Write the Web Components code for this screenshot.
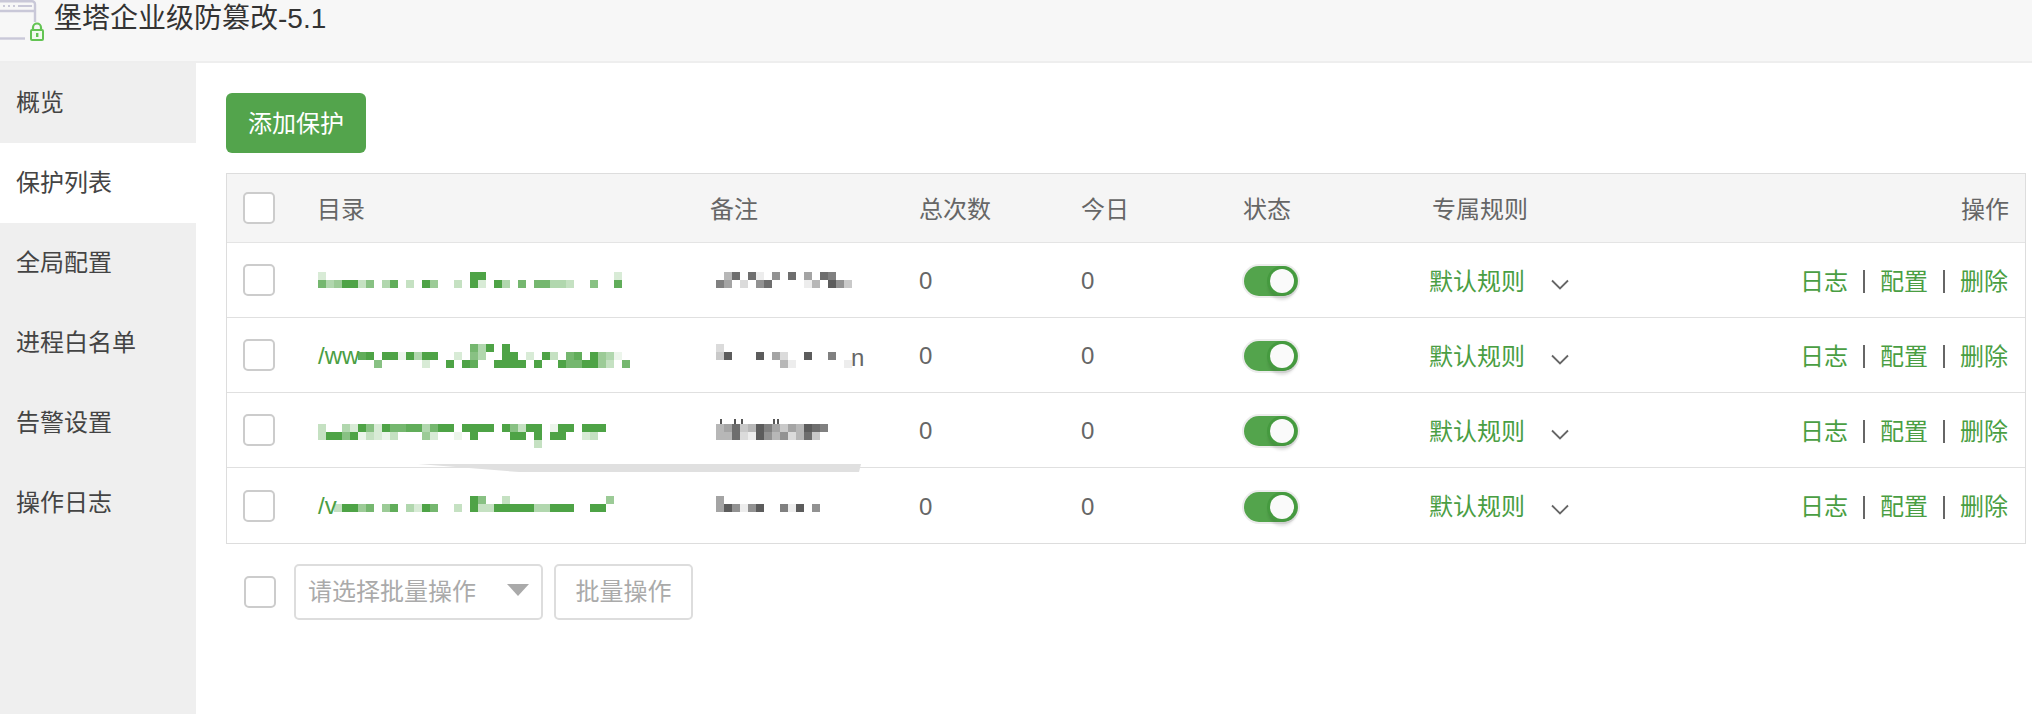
<!DOCTYPE html>
<html lang="zh">
<head>
<meta charset="utf-8">
<title>堡塔企业级防篡改</title>
<style>
    html, body { margin: 0; height: 100%; background: #fff; }
    body { font-family: "Liberation Sans", "Noto Sans CJK SC", sans-serif; overflow: hidden; }
    .pagina { display: flex; flex-direction: column; height: 714px; }
    .cuerpo { display: flex; flex: 1; min-height: 0; }
    .contenido { flex: 1; padding: 30px 6px 0 30px; min-width: 0; }
</style>
</head>
<body>
<div class="pagina">
    <bt-header>堡塔企业级防篡改-5.1</bt-header>
    <div class="cuerpo">
        <bt-sidebar>
            <bt-menu-item>概览</bt-menu-item>
            <bt-menu-item active>保护列表</bt-menu-item>
            <bt-menu-item>全局配置</bt-menu-item>
            <bt-menu-item>进程白名单</bt-menu-item>
            <bt-menu-item>告警设置</bt-menu-item>
            <bt-menu-item>操作日志</bt-menu-item>
        </bt-sidebar>
        <div class="contenido">
            <bt-button>添加保护</bt-button>
            <bt-table>
                <bt-row>
                    <mosaic-text slot="dir" offset="29" rows="20000000000000000009900000000000000002|74599360480309500309209407077443006008"></mosaic-text>
                    <mosaic-text slot="note" offset="29" tone="gray" rows="048081060805087|75020680000140963"></mosaic-text>
                </bt-row>
                <bt-row>
                    <mosaic-text slot="dir" offset="26" rows="000000000000000000074909|00000890991949900206400990209307809541|000000060000020090980099990900977995307">/ww</mosaic-text>
                    <mosaic-text slot="note" offset="26" tone="gray" rows="2|39000905200900700|00000000410000001" tail="n"></mosaic-text>
                </bt-row>
                <bt-row>
                    <mosaic-text slot="dir" offset="31" rows="300429629778847990999909639901990999|39969132130005200109000099090990023|0000000000000000000000000003"></mosaic-text>
                    <mosaic-text slot="note" offset="31" tone="gray" ticks="4,18,25,57,61" rows="45834975354987|44821964624830"></mosaic-text>
                </bt-row>
                <bt-row>
                    <mosaic-text slot="dir" offset="28" rows="0000000000000000000960030000000000005|003995705804297003093399999449990099">/v</mosaic-text>
                    <mosaic-text slot="note" offset="28" tone="gray" rows="5|5961690071906"></mosaic-text>
                </bt-row>
            </bt-table>
            <bt-footer></bt-footer>
        </div>
    </div>
</div>

<script>
const FUENTE = '"Liberation Sans", "Noto Sans CJK SC", sans-serif';
const VERDE = '#53a44c';
const VERDE_TEXTO = '#4a9e43';

// Cabecera con logo recortado por arriba
class BtHeader extends HTMLElement {
    constructor() {
        super();
        this.attachShadow({ mode: 'open' });
        this.shadowRoot.innerHTML = `
            <style>
                :host {
                    display: flex;
                    height: 61px;
                    flex: none;
                    background: #f7f7f7;
                    border-bottom: 2px solid #eeeeee;
                    font: 28px/38px ${FUENTE};
                    color: #333;
                }
                svg { flex: none; display: block; }
                .titulo { margin-left: 8px; }
            </style>
            <svg width="46" height="42" viewBox="0 0 46 42">
                <g fill="none" stroke="#c9c8d8" stroke-width="2.4">
                    <path d="M0 1.2H32a3 3 0 0 1 3 3V22"/>
                    <path d="M0 11H35"/>
                    <path d="M0 38.5H25"/>
                </g>
                <g fill="#c9c8d8">
                    <rect x="3" y="5" width="2" height="2"/>
                    <rect x="8" y="5" width="2" height="2"/>
                    <rect x="13" y="5" width="2" height="2"/>
                    <rect x="18" y="5" width="14" height="2"/>
                </g>
                <path d="M33 30v-2.500a4 4 0 0 1 8 0V30" fill="none" stroke="#63c453" stroke-width="2.200"/>
                <rect x="31" y="30" width="12" height="10" rx="1" fill="#f2fbef" stroke="#63c453" stroke-width="2"/>
                <rect x="36" y="33" width="2.400" height="4" fill="#63c453"/>
            </svg>
            <span class="titulo"><slot></slot></span>
        `;
    }
}

class BtSidebar extends HTMLElement {
    constructor() {
        super();
        this.attachShadow({ mode: 'open' });
        this.shadowRoot.innerHTML = `
            <style>
                :host { display: block; width: 196px; flex: none; background: #efefef; }
            </style>
            <slot></slot>
        `;
    }
}

class BtMenuItem extends HTMLElement {
    constructor() {
        super();
        this.attachShadow({ mode: 'open' });
        this.shadowRoot.innerHTML = `
            <style>
                :host {
                    display: flex;
                    align-items: center;
                    box-sizing: border-box;
                    height: 80px;
                    padding: 0 0 5px 16px;
                    font: 24px ${FUENTE};
                    color: #444;
                }
                :host([active]) { background: #fff; }
            </style>
            <slot></slot>
        `;
    }
}

class BtButton extends HTMLElement {
    constructor() {
        super();
        this.attachShadow({ mode: 'open' });
        this.shadowRoot.innerHTML = `
            <style>
                :host {
                    display: flex;
                    align-items: center;
                    justify-content: center;
                    box-sizing: border-box;
                    width: 140px;
                    height: 60px;
                    padding-bottom: 3px;
                    border-radius: 6px;
                    background: ${VERDE};
                    color: #fff;
                    font: 24px ${FUENTE};
                }
            </style>
            <slot></slot>
        `;
    }
}

class BtCheck extends HTMLElement {
    constructor() {
        super();
        this.attachShadow({ mode: 'open' });
        this.shadowRoot.innerHTML = `
            <style>
                :host {
                    display: block;
                    width: 32px;
                    height: 32px;
                    box-sizing: border-box;
                    border: 2px solid #cccccc;
                    border-radius: 5px;
                    background: #fff;
                    flex: none;
                }
            </style>
        `;
    }
}

class BtSwitch extends HTMLElement {
    constructor() {
        super();
        this.attachShadow({ mode: 'open' });
        this.shadowRoot.innerHTML = `
            <style>
                :host {
                    display: block;
                    position: relative;
                    width: 54px;
                    height: 30px;
                    margin-top: 2px;
                    border-radius: 15px;
                    background: ${VERDE};
                    box-shadow: 0 0 0 2px #ececec;
                }
                .bola {
                    position: absolute;
                    right: 4px;
                    top: 3px;
                    width: 24px;
                    height: 24px;
                    border-radius: 50%;
                    background: #fafafa;
                    box-shadow: 0 0 0 3px #459a3f, 0 5px 3px 2px rgba(0, 0, 0, 0.12);
                }
            </style>
            <div class="bola"></div>
        `;
    }
}

// Texto pixelado: cada digito es la opacidad de un cuadro de 8px
class MosaicText extends HTMLElement {
    constructor() {
        super();
        this.attachShadow({ mode: 'open' });
    }

    connectedCallback() {
        const filas = (this.getAttribute('rows') || '').split('|');
        const gris = this.getAttribute('tone') === 'gray';
        const color = gris ? '#5c5c5c' : '#4ea346';
        const tail = this.getAttribute('tail');
        const ticks = this.getAttribute('ticks');
        let cuadros = '';
        filas.forEach((fila, y) => {
            [...fila].forEach((d, x) => {
                if (d === '0') return;
                const op = Number(d) === 9 ? 1 : Number(d) / 9;
                cuadros += `<rect x="${x * 8}" y="${y * 8}" width="8" height="8" fill="${color}" opacity="${op.toFixed(2)}"/>`;
            });
        });
        // restos de letras que asoman por encima del mosaico
        if (ticks) {
            ticks.split(',').forEach((x) => {
                cuadros += `<rect x="${x}" y="-5" width="2" height="5" fill="#555"/>`;
            });
        }
        const offset = this.getAttribute('offset') || 0;
        this.shadowRoot.innerHTML = `
            <style>
                :host {
                    display: block;
                    position: relative;
                    margin-top: ${offset}px;
                    margin-left: ${gris ? 6 : 0}px;
                    height: 24px;
                }
                svg { display: block; position: relative; overflow: visible; }
                .prefijo {
                    position: absolute;
                    left: 0;
                    top: ${filas.length === 3 ? -3 : -5}px;
                    font: 24px/30px ${FUENTE};
                    color: ${VERDE_TEXTO};
                    white-space: nowrap;
                }
                .cola {
                    position: absolute;
                    left: 135px;
                    top: -1px;
                    font: 24px/30px ${FUENTE};
                    color: #666;
                }
            </style>
            <span class="prefijo"><slot></slot></span>
            <svg width="320" height="24" viewBox="0 0 320 24">${cuadros}</svg>
            ${tail ? `<span class="cola">${tail}</span>` : ''}
        `;
    }
}

const COLUMNAS = 'grid-template-columns: 91px 392px 209px 162px 163px 187px 300px 1fr;';

class BtTable extends HTMLElement {
    constructor() {
        super();
        this.attachShadow({ mode: 'open' });
        this.shadowRoot.innerHTML = `
            <style>
                :host {
                    display: block;
                    position: relative;
                    margin-top: 20px;
                    border: 1px solid #dddddd;
                    font: 24px ${FUENTE};
                    color: #666;
                }
                .cabecera {
                    display: grid;
                    ${COLUMNAS}
                    align-items: center;
                    height: 68px;
                    background: #f5f5f5;
                    border-bottom: 1px solid #e4e4e4;
                    color: #666;
                }
                .cabecera > div { margin-bottom: 2px; }
                .cabecera > .check { padding-left: 16px; margin-bottom: 0; }
                .reglas { padding-left: 1px; }
                .corrido { margin-left: -1px; }
                .derecha { text-align: right; padding-right: 16px; }
                /* franja gris que cruza la tabla en la captura */
                .franja { position: absolute; left: 191px; top: 290px; display: block; }
            </style>
            <div class="cabecera">
                <div class="check"><bt-check></bt-check></div>
                <div class="corrido">目录</div>
                <div>备注</div>
                <div>总次数</div>
                <div>今日</div>
                <div class="corrido">状态</div>
                <div class="reglas">专属规则</div>
                <div class="derecha">操作</div>
            </div>
            <slot></slot>
            <svg class="franja" width="443" height="9" viewBox="0 0 443 9">
                <path d="M0 0H443L441 8H101Z" fill="#e0e0e0"/>
            </svg>
        `;
    }
}

class BtRow extends HTMLElement {
    constructor() {
        super();
        this.attachShadow({ mode: 'open' });
        this.shadowRoot.innerHTML = `
            <style>
                :host {
                    display: grid;
                    ${COLUMNAS}
                    align-items: center;
                    height: 74px;
                    border-bottom: 1px solid #e0e0e0;
                    color: #666;
                }
                :host(:last-child) { border-bottom: 0; height: 75px; }
                .check { padding-left: 16px; }
                .mosaico { align-self: start; min-width: 0; }
                .cero { padding-top: 2px; }
                .regla { display: flex; align-items: center; color: ${VERDE_TEXTO}; margin-left: -2px; }
                .regla span { margin-top: -2px; }
                .regla svg { margin-left: 26px; margin-top: 8px; display: block; }
                .acciones {
                    display: flex;
                    justify-content: flex-end;
                    align-items: center;
                    padding-right: 17px;
                    color: ${VERDE_TEXTO};
                }
                .acciones span:not(.sep) { margin-top: -2px; }
                .sep { width: 2px; height: 23px; margin: 3px 15px 0; background: #666; }
            </style>
            <div class="check"><bt-check></bt-check></div>
            <div class="mosaico"><slot name="dir"></slot></div>
            <div class="mosaico"><slot name="note"></slot></div>
            <div class="cero">0</div>
            <div class="cero">0</div>
            <div><bt-switch></bt-switch></div>
            <div class="regla">
                <span>默认规则</span>
                <svg width="18" height="11" viewBox="0 0 18 11"><path d="M1 1.500L9 9.500L17 1.500" fill="none" stroke="#666" stroke-width="1.800"/></svg>
            </div>
            <div class="acciones">
                <span>日志</span><span class="sep"></span><span>配置</span><span class="sep"></span><span>删除</span>
            </div>
        `;
    }
}

class BtFooter extends HTMLElement {
    constructor() {
        super();
        this.attachShadow({ mode: 'open' });
        this.shadowRoot.innerHTML = `
            <style>
                :host {
                    display: flex;
                    align-items: center;
                    margin-top: 20px;
                    padding-left: 18px;
                    font: 24px ${FUENTE};
                    color: #aaa;
                }
                .selector, .boton {
                    display: flex;
                    align-items: center;
                    box-sizing: border-box;
                    height: 56px;
                    padding-bottom: 5px;
                    border: 2px solid #dddddd;
                    border-radius: 5px;
                }
                .selector {
                    width: 249px;
                    margin-left: 18px;
                    padding-left: 12px;
                    justify-content: space-between;
                }
                .flecha {
                    width: 0;
                    height: 0;
                    margin-right: 12px;
                    border-left: 11px solid transparent;
                    border-right: 11px solid transparent;
                    border-top: 12px solid #aaa;
                }
                .boton { width: 139px; margin-left: 11px; justify-content: center; }
            </style>
            <bt-check></bt-check>
            <div class="selector"><span>请选择批量操作</span><span class="flecha"></span></div>
            <div class="boton">批量操作</div>
        `;
    }
}

customElements.define('bt-header', BtHeader);
customElements.define('bt-sidebar', BtSidebar);
customElements.define('bt-menu-item', BtMenuItem);
customElements.define('bt-button', BtButton);
customElements.define('bt-check', BtCheck);
customElements.define('bt-switch', BtSwitch);
customElements.define('mosaic-text', MosaicText);
customElements.define('bt-table', BtTable);
customElements.define('bt-row', BtRow);
customElements.define('bt-footer', BtFooter);
</script>
</body>
</html>
